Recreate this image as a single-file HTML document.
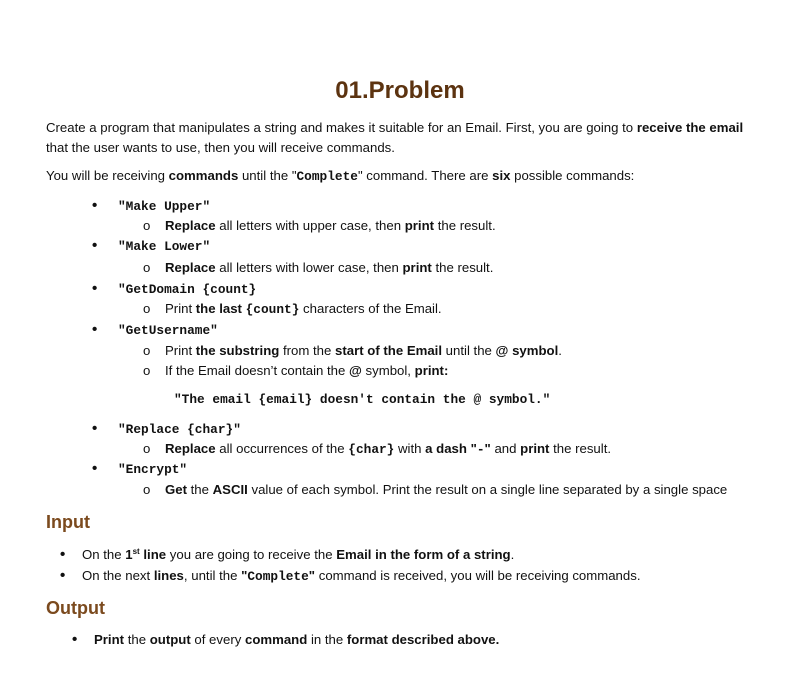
<!DOCTYPE html>
<html><head><meta charset="utf-8"><style>
body{margin:0;width:792px;height:681px;background:#fff;position:relative;font-family:"Liberation Sans",sans-serif;font-size:13.2px;letter-spacing:0;color:#111;overflow:hidden}
.l{position:absolute;white-space:nowrap;line-height:16px}
code{font-family:"Liberation Mono",monospace;font-weight:bold;font-size:12.8px;letter-spacing:0}
h1{position:absolute;margin:0;left:0;width:800px;text-align:center;top:77px;font-size:24px;color:#5c3310;font-weight:bold}
.h{position:absolute;left:46px;font-size:18px;font-weight:bold;color:#7b4a1e}
sup{font-size:8px;line-height:0;vertical-align:5px}
.d{font-size:15px;font-weight:bold}
</style></head><body>
<h1>01.Problem</h1>
<div class="l" style="left:46px;top:120px">Create a program that manipulates a string and makes it suitable for an Email. First, you are going to <b>receive the email</b></div>
<div class="l" style="left:46px;top:140px">that the user wants to use, then you will receive commands.</div>
<div class="l" style="left:46px;top:168px">You will be receiving <b>commands</b> until the "<code>Complete</code>" command. There are <b>six</b> possible commands:</div>

<div class="l d" style="left:92px;top:198px">•</div><div class="l" style="left:118px;top:198px"><code>"Make Upper"</code></div>
<div class="l" style="left:143px;top:218px">o</div><div class="l" style="left:165px;top:218px"><b>Replace</b> all letters with upper case, then <b>print</b> the result.</div>
<div class="l d" style="left:92px;top:238px">•</div><div class="l" style="left:118px;top:238px"><code>"Make Lower"</code></div>
<div class="l" style="left:143px;top:260px">o</div><div class="l" style="left:165px;top:260px"><b>Replace</b> all letters with lower case, then <b>print</b> the result.</div>
<div class="l d" style="left:92px;top:281px">•</div><div class="l" style="left:118px;top:281px"><code>"GetDomain {count}</code></div>
<div class="l" style="left:143px;top:301px">o</div><div class="l" style="left:165px;top:301px">Print <b>the last </b><code>{count}</code> characters of the Email.</div>
<div class="l d" style="left:92px;top:322px">•</div><div class="l" style="left:118px;top:322px"><code>"GetUsername"</code></div>
<div class="l" style="left:143px;top:343px">o</div><div class="l" style="left:165px;top:343px">Print <b>the substring</b> from the <b>start of the Email</b> until the <b>@ symbol</b>.</div>
<div class="l" style="left:143px;top:363px">o</div><div class="l" style="left:165px;top:363px">If the Email doesn’t contain the <b>@</b> symbol, <b>print:</b></div>
<div class="l" style="left:174px;top:391px"><code>"The email {email} doesn't contain the @ symbol."</code></div>
<div class="l d" style="left:92px;top:421px">•</div><div class="l" style="left:118px;top:421px"><code>"Replace {char}"</code></div>
<div class="l" style="left:143px;top:441px">o</div><div class="l" style="left:165px;top:441px"><b>Replace</b> all occurrences of the <code>{char}</code> with <b>a dash "</b><code>-</code><b>"</b> and <b>print</b> the result.</div>
<div class="l d" style="left:92px;top:461px">•</div><div class="l" style="left:118px;top:461px"><code>"Encrypt"</code></div>
<div class="l" style="left:143px;top:482px">o</div><div class="l" style="left:165px;top:482px"><b>Get</b> the <b>ASCII</b> value of each symbol. Print the result on a single line separated by a single space</div>

<div class="h" style="top:512px">Input</div>
<div class="l d" style="left:60px;top:547px">•</div><div class="l" style="left:82px;top:547px">On the <b>1<sup>st</sup> line</b> you are going to receive the <b>Email in the form of a string</b>.</div>
<div class="l d" style="left:60px;top:568px">•</div><div class="l" style="left:82px;top:568px">On the next <b>lines</b>, until the <b>"<code>Complete</code>"</b> command is received, you will be receiving commands.</div>
<div class="h" style="top:598px">Output</div>
<div class="l d" style="left:72px;top:632px">•</div><div class="l" style="left:94px;top:632px"><b>Print</b> the <b>output</b> of every <b>command</b> in the <b>format described above.</b></div>
</body></html>
